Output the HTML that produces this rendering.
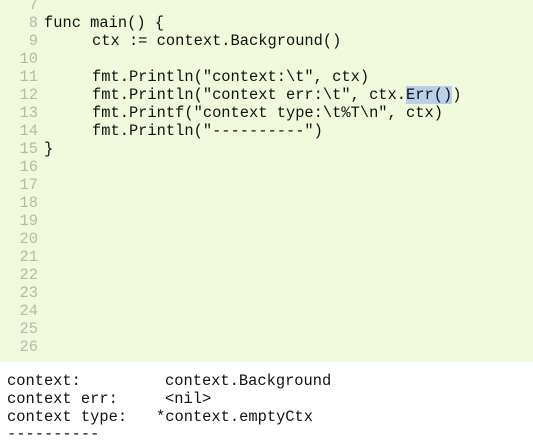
<!DOCTYPE html><html><head><style>
body{margin:0;width:533px;height:440px;overflow:hidden;background:#fff;font-family:"Liberation Mono",monospace;font-size:15.4px}
#ed{position:absolute;left:0;top:0;width:533px;height:362px;background:#f1f9dd}
.l{position:absolute;white-space:pre;color:#111;line-height:18px}
.n{position:absolute;width:38px;text-align:right;color:#b4bcaa;line-height:18px}
.hl{background:#b9cfea}
.o{position:absolute;left:7px;white-space:pre;color:#111;line-height:18px}
</style></head><body>
<div id="ed">
<div class="n" style="top:-4px">7</div>
<div class="n" style="top:14px">8</div><div class="l" style="left:44px;top:14px">func main() {</div>
<div class="n" style="top:32px">9</div><div class="l" style="left:92px;top:32px">ctx := context.Background()</div>
<div class="n" style="top:50px">10</div>
<div class="n" style="top:68px">11</div><div class="l" style="left:92px;top:68px">fmt.Println("context:\t", ctx)</div>
<div class="n" style="top:86px">12</div><div class="l" style="left:92px;top:86px">fmt.Println("context err:\t", ctx.<span class="hl">Err()</span>)</div>
<div class="n" style="top:104px">13</div><div class="l" style="left:92px;top:104px">fmt.Printf("context type:\t%T\n", ctx)</div>
<div class="n" style="top:122px">14</div><div class="l" style="left:92px;top:122px">fmt.Println("----------")</div>
<div class="n" style="top:140px">15</div><div class="l" style="left:44px;top:140px">}</div>
<div class="n" style="top:158px">16</div>
<div class="n" style="top:176px">17</div>
<div class="n" style="top:194px">18</div>
<div class="n" style="top:212px">19</div>
<div class="n" style="top:230px">20</div>
<div class="n" style="top:248px">21</div>
<div class="n" style="top:266px">22</div>
<div class="n" style="top:284px">23</div>
<div class="n" style="top:302px">24</div>
<div class="n" style="top:320px">25</div>
<div class="n" style="top:338px">26</div>
</div>
<div class="o" style="top:372px">context:</div><div class="o" style="left:165px;top:372px">context.Background</div>
<div class="o" style="top:390px">context err:</div><div class="o" style="left:165px;top:390px">&lt;nil&gt;</div>
<div class="o" style="top:408px">context type:</div><div class="o" style="left:156px;top:408px">*context.emptyCtx</div>
<div class="o" style="top:425px">----------</div>
</body></html>
